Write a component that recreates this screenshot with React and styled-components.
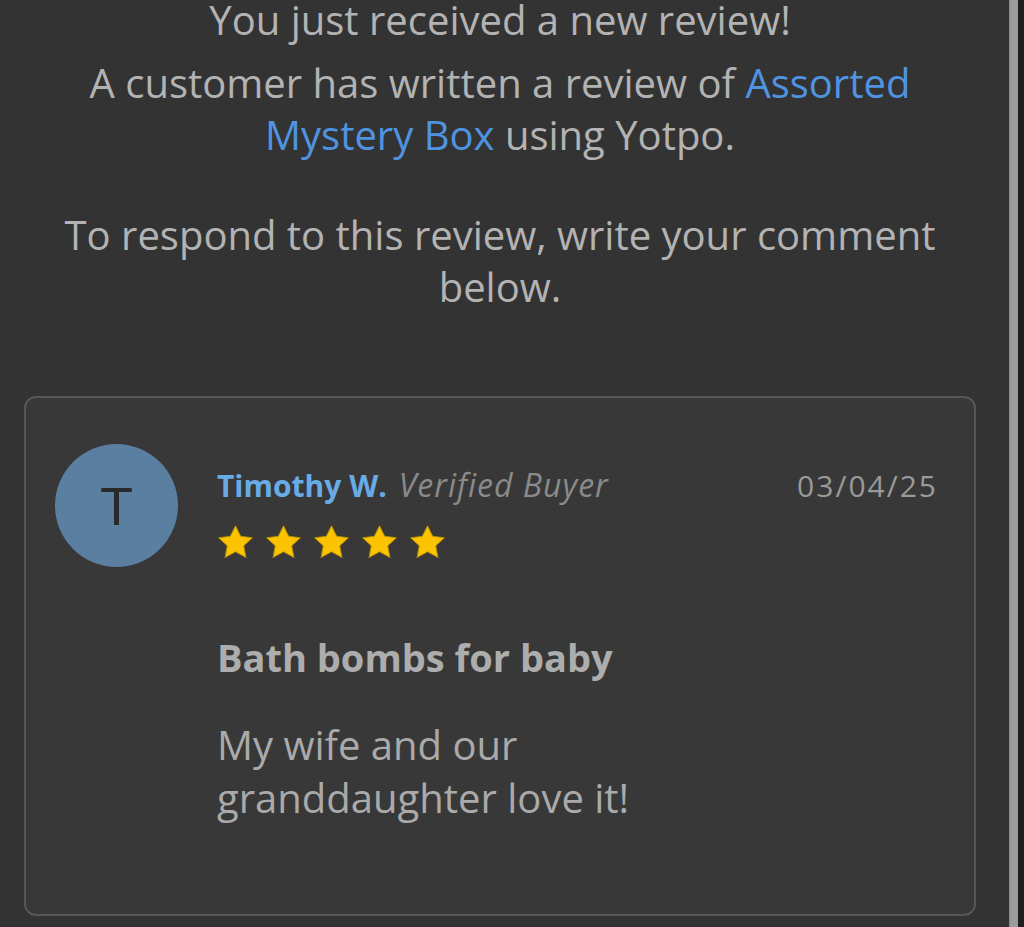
import React from "react";
import styled, { createGlobalStyle } from "styled-components";

const Global = createGlobalStyle`
  html, body { margin: 0; padding: 0; background: #333333; }
  body { font-family: "Open Sans", "Noto Sans", sans-serif; overflow: hidden; }
`;

const Page = styled.div`
  display: flex;
  height: 927px;
  background: #333333;
  overflow: hidden;
`;

const Main = styled.main`
  width: 1000px;
  min-width: 1000px;
  flex: none;
  padding: 0 24px;
  box-sizing: border-box;
  display: flex;
  flex-direction: column;
`;

const Gutter = styled.div`
  width: 9px;
  min-width: 9px;
  flex: none;
`;

const ScrollThumb = styled.div`
  width: 9px;
  min-width: 9px;
  flex: none;
  background: #9c9c9c;
  border-left: 1px solid #8a8a8a;
  box-sizing: border-box;
`;

const ScrollEdge = styled.div`
  flex: 1;
  background: #1f1f1f;
`;

const Intro = styled.section`
  text-align: center;
  color: #b3b3b3;
  font-size: 40px;
  line-height: 52px;
`;

const Para = styled.p`
  margin: ${(p) => p.$top || 0}px 0 0;
  line-height: ${(p) => p.$lh || 52}px;
`;

const Link = styled.a`
  color: #4f94e0;
  text-decoration: none;
`;

const Card = styled.article`
  margin-top: 83px;
  height: 520px;
  box-sizing: border-box;
  border: 2px solid #565656;
  border-radius: 12px;
  background: #383838;
  padding: 46px 38px 0 29px;
  display: flex;
  gap: 39px;
`;

const Avatar = styled.div`
  width: 123px;
  height: 123px;
  flex: none;
  border-radius: 50%;
  background: #5a7fa0;
  color: #2a2a2a;
  font-family: "Liberation Sans", Arial, sans-serif;
  font-size: 54px;
  display: flex;
  align-items: center;
  justify-content: center;
`;

const Body = styled.div`
  flex: 1;
  display: flex;
  flex-direction: column;
`;

const HeaderRow = styled.div`
  display: flex;
  align-items: baseline;
  justify-content: space-between;
  font-size: 30px;
  line-height: 40px;
  margin-top: 21px;
`;

const Name = styled.span`
  color: #68abe6;
  font-weight: 700;
`;

const Verified = styled.span`
  color: #8a8a8a;
  font-style: italic;
  font-size: 32px;
  letter-spacing: 1px;
  margin-left: 12px;
`;

const DateText = styled.span`
  color: #9a9a9a;
  letter-spacing: 2px;
  margin-right: -2px;
`;

const Stars = styled.div`
  display: flex;
  gap: 11px;
  margin-top: 19px;
`;

const Title = styled.h3`
  margin: 71px 0 0;
  color: #adadad;
  font-size: 38px;
  line-height: 52px;
  font-weight: 700;
`;

const Text = styled.p`
  margin: 35px 0 0;
  color: #aaaaaa;
  font-size: 40px;
  line-height: 53px;
`;

const Star = () => (
  <svg width="37" height="35" viewBox="0 0 24 23">
    <path
      d="M12 0.5l3.4 6.9 7.7 1-5.7 5.3 1.5 7.7L12 17.6l-6.9 3.8 1.5-7.7-5.7-5.3 7.7-1z"
      fill="#fcc400"
      stroke="#b88f00"
      strokeWidth="0.6"
      strokeLinejoin="round"
    />
  </svg>
);

export default function App() {
  return (
    <>
      <Global />
      <Page>
        <Main>
          <Intro>
            <Para $lh={40}>You just received a new review!</Para>
            <Para $top={17}>
              A customer has written a review of <Link href="#">Assorted</Link>
              <br />
              <Link href="#">Mystery Box</Link> using Yotpo.
            </Para>
            <Para $top={48}>
              To respond to this review, write your comment
              <br />
              below.
            </Para>
          </Intro>
          <Card>
            <Avatar>T</Avatar>
            <Body>
              <HeaderRow>
                <span>
                  <Name>Timothy W.</Name>
                  <Verified>Verified Buyer</Verified>
                </span>
                <DateText>03/04/25</DateText>
              </HeaderRow>
              <Stars>
                {[0, 1, 2, 3, 4].map((i) => (
                  <Star key={i} />
                ))}
              </Stars>
              <Title>Bath bombs for baby</Title>
              <Text>
                My wife and our
                <br />
                granddaughter love it!
              </Text>
            </Body>
          </Card>
        </Main>
        <Gutter />
        <ScrollThumb />
        <ScrollEdge />
      </Page>
    </>
  );
}
